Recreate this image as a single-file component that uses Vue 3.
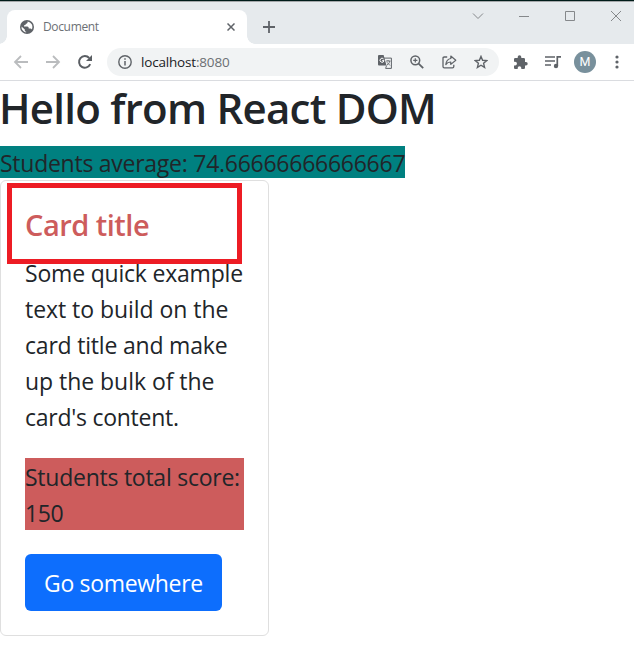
<script setup>
const paragraph = [
  { text: 'Some quick example', cls: 'l1' },
  { text: 'text to build on the', cls: 'l2' },
  { text: 'card title and make', cls: 'l3' },
  { text: 'up the bulk of the', cls: 'l4' },
  { text: "card's content.", cls: 'l5' },
]
</script>

<template>
  <div class="window">
    <header class="tabbar">
      <div class="tab">
        <svg class="globe" width="14" height="14" viewBox="0 0 14 14">
          <circle cx="7" cy="7" r="7" fill="#5f6368" />
          <path d="M7.6 1.5C7.8 3 7 3.6 5.8 3.8 5.8 5 5 5.2 4 5.3v1.3h3.2c1.2 0 1.5.8 1.5 1.9h1.6c.7 0 1.2.3 1.5.9A5.5 5.5 0 0 0 7.6 1.5z" fill="#fff" />
          <path d="M1.5 6.4 4.8 9.4v1c0 .8.5 1.2 1.3 1.2v.9A5.6 5.6 0 0 1 1.5 6.4z" fill="#fff" />
        </svg>
        <span class="tab-title">Document</span>
        <svg class="tab-close" width="8" height="8" viewBox="0 0 8 8"><path d="M.5.5l7 7M7.5.5l-7 7" stroke="#5f6368" stroke-width="1.5" /></svg>
      </div>
      <svg class="plus" width="12" height="12" viewBox="0 0 12 12"><path d="M6 0v12M0 6h12" stroke="#5f6368" stroke-width="1.8" /></svg>
      <div class="controls">
        <svg width="12" height="12" viewBox="0 0 12 12"><path d="M1 3.5l5 5 5-5" /></svg>
        <svg width="12" height="12" viewBox="0 0 12 12"><path d="M1 6.5h10" /></svg>
        <svg width="12" height="12" viewBox="0 0 12 12"><path d="M1.5 1.5h9v9h-9z" /></svg>
        <svg width="12" height="12" viewBox="0 0 12 12"><path d="M1 1l10 10M11 1L1 11" /></svg>
      </div>
    </header>

    <nav class="toolbar">
      <svg class="arrow" width="16" height="16" viewBox="0 0 16 16"><path d="M15 8H2M8 2L2 8l6 6" fill="none" stroke="#babcbe" stroke-width="1.8" /></svg>
      <svg class="arrow fwd" width="16" height="16" viewBox="0 0 16 16"><path d="M1 8h13M8 2l6 6-6 6" fill="none" stroke="#babcbe" stroke-width="1.8" /></svg>
      <svg class="reload" width="16" height="16" viewBox="0 0 16 16"><path d="M13.2 10.2A5.8 5.8 0 1 1 12.2 4" fill="none" stroke="#5a5e63" stroke-width="2" /><path d="M15 1v6H9z" fill="#5a5e63" /></svg>
      <div class="omnibox">
        <svg class="info" width="14" height="14" viewBox="0 0 14 14"><circle cx="7" cy="7" r="6.2" fill="none" stroke="#5f6368" stroke-width="1.4" /><path d="M7 6v4.5M7 3.3v1.5" stroke="#5f6368" stroke-width="1.5" /></svg>
        <span class="url">localhost<i>:8080</i></span>
        <svg class="translate" width="14" height="14" viewBox="0 0 14 14">
          <path d="M5.5 3.1h7.9v10.3H7.6" fill="none" stroke="#5f6368" />
          <path d="M1 0h4.6l2.9 10.5H1a1 1 0 0 1-1-1V1a1 1 0 0 1 1-1z" fill="#5f6368" />
          <path d="M5.6 4A2 2 0 1 0 6 5.6H4.2" fill="none" stroke="#fff" />
          <path d="M8 6h4.5M10 5v1M11.8 6c-.4 2-1.3 3-2.8 4M9 7.3l3 3.2M7.6 13.4l1-2.9" fill="none" stroke="#5f6368" stroke-width=".9" />
        </svg>
        <svg class="magnify" width="14" height="14" viewBox="0 0 14 14"><circle cx="5.3" cy="5.3" r="4.4" fill="none" stroke="#5f6368" stroke-width="1.5" /><path d="M8.6 8.6l4.6 4.6" stroke="#5f6368" stroke-width="1.8" /><path d="M5.3 3.2v4.2M3.2 5.3h4.2" stroke="#5f6368" stroke-width="1.2" /></svg>
        <svg class="share" width="15" height="14" viewBox="0 0 15 14"><path d="M5.2 2H2.3Q1 2 1 3.3v8.2q0 1.3 1.3 1.3h8.2q1.3 0 1.3-1.3V9.8" fill="none" stroke="#5f6368" stroke-width="1.3" /><path d="M8.8 1l5 4.2-5 4.2V7C6.3 6.9 4.9 7.9 3.8 9.6 4.2 6.2 5.6 3.9 8.8 3.5z" fill="none" stroke="#5f6368" stroke-width="1.2" stroke-linejoin="round" /></svg>
        <svg class="star" width="14" height="14" viewBox="0 0 14 14"><path d="M7 1.4l1.6 3.9 4.2.3-3.2 2.7 1 4.1L7 10.2l-3.6 2.2 1-4.1L1.2 5.6l4.2-.3z" fill="none" stroke="#5f6368" stroke-width="1.4" /></svg>
      </div>
      <svg class="puzzle" width="15" height="15" viewBox="0 0 15 15"><path d="M13 7h-1V4.2Q12 3 10.8 3H8.3V2a1.8 1.8 0 0 0-3.6 0v1H2.2Q1 3 1 4.2v2.5h1.1a1.8 1.8 0 0 1 0 3.7H1v2.5Q1 14 2.2 14h2.5v-1a1.8 1.8 0 0 1 3.6 0v1h2.5q1.2 0 1.2-1.2v-2.4h1A1.7 1.7 0 0 0 13 7z" fill="#5f6368" /></svg>
      <svg class="media" width="16" height="14" viewBox="0 0 16 14"><path d="M0 2h10M0 6h10M0 10h6M12.3 11V1.8H16" fill="none" stroke="#5f6368" stroke-width="1.7" /><circle cx="11" cy="11" r="2.2" fill="#5f6368" /></svg>
      <div class="avatar">M</div>
      <svg class="dots" width="4" height="14" viewBox="0 0 4 14"><g fill="#5f6368"><circle cx="2" cy="2" r="1.6" /><circle cx="2" cy="7" r="1.6" /><circle cx="2" cy="12" r="1.6" /></g></svg>
    </nav>

    <main class="page">
      <h1>Hello from React DOM</h1>
      <div class="average"><span>Students average: 74.66666666666667</span></div>
      <section class="card">
        <h5>Card title</h5>
        <p class="copy"><span v-for="l in paragraph" :key="l.cls" :class="l.cls">{{ l.text }}</span></p>
        <p class="score"><span class="s1">Students total score:</span><span class="s2">150</span></p>
        <a class="btn"><span>Go somewhere</span></a>
        <div class="highlight"></div>
      </section>
    </main>
  </div>
</template>

<style>
body { margin: 0; background: #fff; overflow: hidden; }
</style>

<style scoped>
* { box-sizing: border-box; }
svg { display: block; flex: none; }
.window { width: 634px; height: 662px; background: #fff; color: #212529; font-family: "Open Sans", "Noto Sans", sans-serif; white-space: nowrap; overflow: hidden; }
.tabbar { height: 44px; background: #e6eaed; border-top: 1px solid #001c19; box-shadow: inset 0 1px #a5a8aa; display: flex; padding-left: 7px; }
.tab { width: 240px; height: 34px; margin-top: 9px; background: #fff; border-radius: 8px 8px 0 0; display: flex; align-items: center; padding: 0 11px 0 13px; position: relative; }
.tab::before, .tab::after { content: ""; position: absolute; bottom: 0; width: 8px; height: 8px; }
.tab::before { left: -8px; background: radial-gradient(circle at 0 0, transparent 7.5px, #fff 8px); }
.tab::after { right: -8px; background: radial-gradient(circle at 100% 0, transparent 7.5px, #fff 8px); }
.tab-title { margin-left: 9px; font-size: 12px; line-height: 16px; color: #6c7075; letter-spacing: -.35px; }
.tab-close { margin-left: auto; margin-right: 1px; }
.plus { margin: 20px 0 0 16px; }
.controls { margin-left: auto; padding: 9px 12px 0 0; display: flex; gap: 34px; }
.controls path { fill: none; stroke: #85888b; stroke-width: 1; }
.toolbar { height: 37px; border-bottom: 1px solid #dadce0; display: flex; align-items: center; }
.arrow { margin-left: 13px; }
.fwd { margin-left: 16px; }
.reload { margin-left: 16px; }
.omnibox { width: 392px; height: 28px; margin-left: 14px; border-radius: 14px; background: #f1f3f4; display: flex; align-items: center; padding-left: 11px; }
.url { width: 237px; margin-left: 9px; font-size: 13.5px; color: #202124; letter-spacing: -.18px; }
.url i { font-style: normal; color: #6b6f73; }
.magnify { margin-left: 18px; }
.share { margin-left: 18px; }
.star { margin-left: 17px; }
.puzzle { margin-left: 14px; }
.media { margin-left: 17px; }
.avatar { width: 22px; height: 22px; margin-left: 13px; border-radius: 50%; background: #78909c; color: #fff; font: 400 12.5px/22px Roboto, sans-serif; text-align: center; }
.dots { margin-left: 19px; }
h1 { margin: 0; height: 65px; padding-top: 1px; font-size: 42px; line-height: 52px; font-weight: 600; letter-spacing: -.75px; text-indent: -1px; }
.average { height: 34px; font-size: 23px; line-height: 32px; }
.average span { display: block; width: 405px; height: 32px; padding-top: 1px; background: #008080; letter-spacing: -.26px; }
.card { position: relative; width: 269px; height: 456px; border: 1px solid #dfdfdf; border-radius: 6px; padding: 24px; font-size: 23px; line-height: 36px; }
h5 { margin: 0; height: 49px; font-size: 29px; line-height: 40px; font-weight: 600; letter-spacing: -.5px; color: #cd5c5c; }
p { margin: 0; }
.copy { height: 180px; padding-top: 1px; }
p span { display: block; }
.l1, .l3 { letter-spacing: -.2px; }
.l2 { letter-spacing: -.05px; }
.l4 { letter-spacing: -.04px; }
.l5 { letter-spacing: -.26px; }
.s1 { letter-spacing: -.25px; }
.s2 { letter-spacing: -.4px; }
.score { width: 219px; height: 72px; margin-top: 24px; padding-top: 1px; background: #cd5c5c; }
.btn { display: block; width: 197px; height: 57px; margin-top: 24px; padding: 11px 19px; border-radius: 6px; background: #0d6efd; color: #fff; letter-spacing: -.32px; }
.highlight { position: absolute; left: 6px; top: 2px; width: 235px; height: 81px; border: 5px solid #ed1c24; }
</style>
